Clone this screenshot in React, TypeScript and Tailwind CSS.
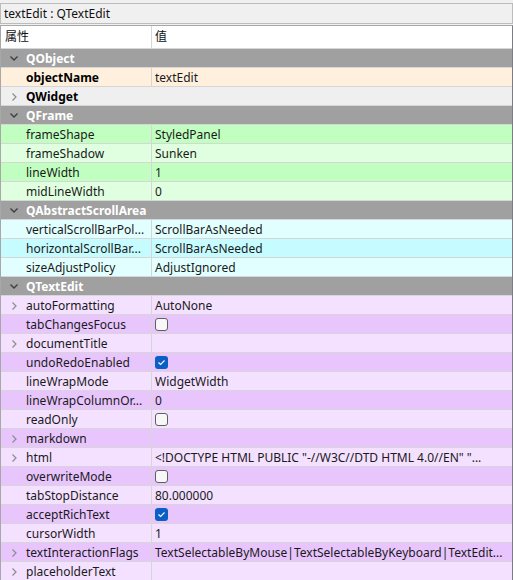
import React from 'react';

type Row =
  | { kind: 'cat'; label: string }
  | {
      kind: 'prop';
      label: string;
      value?: string;
      bg: string;
      bold?: boolean;
      expand?: boolean;
      check?: boolean;
      span?: boolean;
    };

const GREEN_D = 'bg-[#c0ffc0]';
const GREEN_L = 'bg-[#e0ffe0]';
const CYAN_D = 'bg-[#c6fbff]';
const CYAN_L = 'bg-[#e2ffff]';
const PURP_D = 'bg-[#e8c6fd]';
const PURP_L = 'bg-[#f4e1ff]';

const rows: Row[] = [
  { kind: 'cat', label: 'QObject' },
  { kind: 'prop', label: 'objectName', value: 'textEdit', bg: 'bg-[#fff0de]', bold: true },
  { kind: 'prop', label: 'QWidget', bg: 'bg-[#efefef]', bold: true, expand: true, span: true },
  { kind: 'cat', label: 'QFrame' },
  { kind: 'prop', label: 'frameShape', value: 'StyledPanel', bg: GREEN_D },
  { kind: 'prop', label: 'frameShadow', value: 'Sunken', bg: GREEN_L },
  { kind: 'prop', label: 'lineWidth', value: '1', bg: GREEN_D },
  { kind: 'prop', label: 'midLineWidth', value: '0', bg: GREEN_L },
  { kind: 'cat', label: 'QAbstractScrollArea' },
  { kind: 'prop', label: 'verticalScrollBarPol...', value: 'ScrollBarAsNeeded', bg: CYAN_L },
  { kind: 'prop', label: 'horizontalScrollBar...', value: 'ScrollBarAsNeeded', bg: CYAN_D },
  { kind: 'prop', label: 'sizeAdjustPolicy', value: 'AdjustIgnored', bg: CYAN_L },
  { kind: 'cat', label: 'QTextEdit' },
  { kind: 'prop', label: 'autoFormatting', value: 'AutoNone', bg: PURP_L, expand: true },
  { kind: 'prop', label: 'tabChangesFocus', bg: PURP_D, check: false },
  { kind: 'prop', label: 'documentTitle', value: '', bg: PURP_L, expand: true },
  { kind: 'prop', label: 'undoRedoEnabled', bg: PURP_D, check: true },
  { kind: 'prop', label: 'lineWrapMode', value: 'WidgetWidth', bg: PURP_L },
  { kind: 'prop', label: 'lineWrapColumnOr...', value: '0', bg: PURP_D },
  { kind: 'prop', label: 'readOnly', bg: PURP_L, check: false },
  { kind: 'prop', label: 'markdown', value: '', bg: PURP_D, expand: true },
  {
    kind: 'prop',
    label: 'html',
    value: '<!DOCTYPE HTML PUBLIC "-//W3C//DTD HTML 4.0//EN" "...',
    bg: PURP_L,
    expand: true,
  },
  { kind: 'prop', label: 'overwriteMode', bg: PURP_D, check: false },
  { kind: 'prop', label: 'tabStopDistance', value: '80.000000', bg: PURP_L },
  { kind: 'prop', label: 'acceptRichText', bg: PURP_D, check: true },
  { kind: 'prop', label: 'cursorWidth', value: '1', bg: PURP_L },
  {
    kind: 'prop',
    label: 'textInteractionFlags',
    value: 'TextSelectableByMouse|TextSelectableByKeyboard|TextEdit...',
    bg: PURP_D,
    expand: true,
  },
  { kind: 'prop', label: 'placeholderText', value: '', bg: PURP_L, expand: true },
];

const ChevronDown = () => (
  <svg width="8" height="5" viewBox="0 0 8 5" className="shrink-0">
    <path d="M0.5 0.5 L4 4 L7.5 0.5" fill="none" stroke="#3c3c3c" strokeWidth="1.3" />
  </svg>
);

const ChevronRight = () => (
  <svg width="5" height="8" viewBox="0 0 5 8" className="shrink-0">
    <path d="M0.5 0.5 L4 4 L0.5 7.5" fill="none" stroke="#8c8c8c" strokeWidth="1.2" />
  </svg>
);

const CheckBox = ({ checked }: { checked: boolean }) =>
  checked ? (
    <span className="flex h-[13px] w-[13px] items-center justify-center rounded-[3px] bg-[#0b5fc4]">
      <svg width="9" height="7" viewBox="0 0 9 7">
        <path d="M1.5 3.5 L3.6 5.4 L7.5 1.5" fill="none" stroke="#ffffff" strokeWidth="1.1" />
      </svg>
    </span>
  ) : (
    <span className="block h-[13px] w-[13px] rounded-[3px] border border-[#5f5f5f] bg-[#f7f7f7]" />
  );

const PropertyRow = ({ row }: { row: Row }) => {
  if (row.kind === 'cat') {
    return (
      <div className="flex h-[19px] items-center border-b border-[#d6d6d6] bg-[#a0a0a0]">
        <span className="flex w-[25px] justify-center pl-[1px] pt-[1px]">
          <ChevronDown />
        </span>
        <span className="pt-[2px] font-bold text-white">{row.label}</span>
      </div>
    );
  }

  return (
    <div className={`flex h-[19px] items-center border-b border-[#d6d6d6] ${row.bg}`}>
      <div
        className={`flex h-full w-[151px] shrink-0 items-center ${
          row.span ? '' : 'border-r border-[#d6d6d6]'
        }`}
      >
        <span className="flex w-[25px] justify-center pl-[1px] pt-[1px]">
          {row.expand && <ChevronRight />}
        </span>
        <span
          className={`whitespace-nowrap pt-[2px] ${row.bold ? 'font-bold text-black' : 'text-[#1a1a1a]'}`}
        >
          {row.label}
        </span>
      </div>
      {!row.span && (
        <div className="flex h-full min-w-0 flex-1 items-center pl-[3px]">
          {row.check !== undefined ? (
            <span className="pt-[1px]">
              <CheckBox checked={row.check} />
            </span>
          ) : (
            <span className="whitespace-nowrap pt-[2px] text-[#1a1a1a]">{row.value}</span>
          )}
        </div>
      )}
    </div>
  );
};

export default function App() {
  return (
    <div
      className="h-[580px] w-[513px] overflow-hidden bg-[#f0f0f0] text-[12px] leading-none"
      style={{ fontFamily: '"Noto Sans", "Noto Sans CJK SC", sans-serif' }}
    >
      {/* Object title bar */}
      <div className="pt-[3px]">
        <div className="flex h-[21px] items-center border border-[#bcbcbc] bg-[#f0f0f0] pl-[3px] text-[#111]">
          textEdit : QTextEdit
        </div>
      </div>

      {/* Property tree */}
      <div className="mt-[1px] border-l border-t border-r border-[#a8a8a8] border-r-[#7c7c84] bg-white">
        <div className="flex h-[23px] items-center border-b border-[#d6d6d6] bg-white text-[#111]">
          <div className="flex h-full w-[151px] items-center border-r border-[#d6d6d6] pl-[4px]">属性</div>
          <div className="pl-[3px]">值</div>
        </div>
        {rows.map((row, i) => (
          <PropertyRow key={i} row={row} />
        ))}
      </div>
    </div>
  );
}
